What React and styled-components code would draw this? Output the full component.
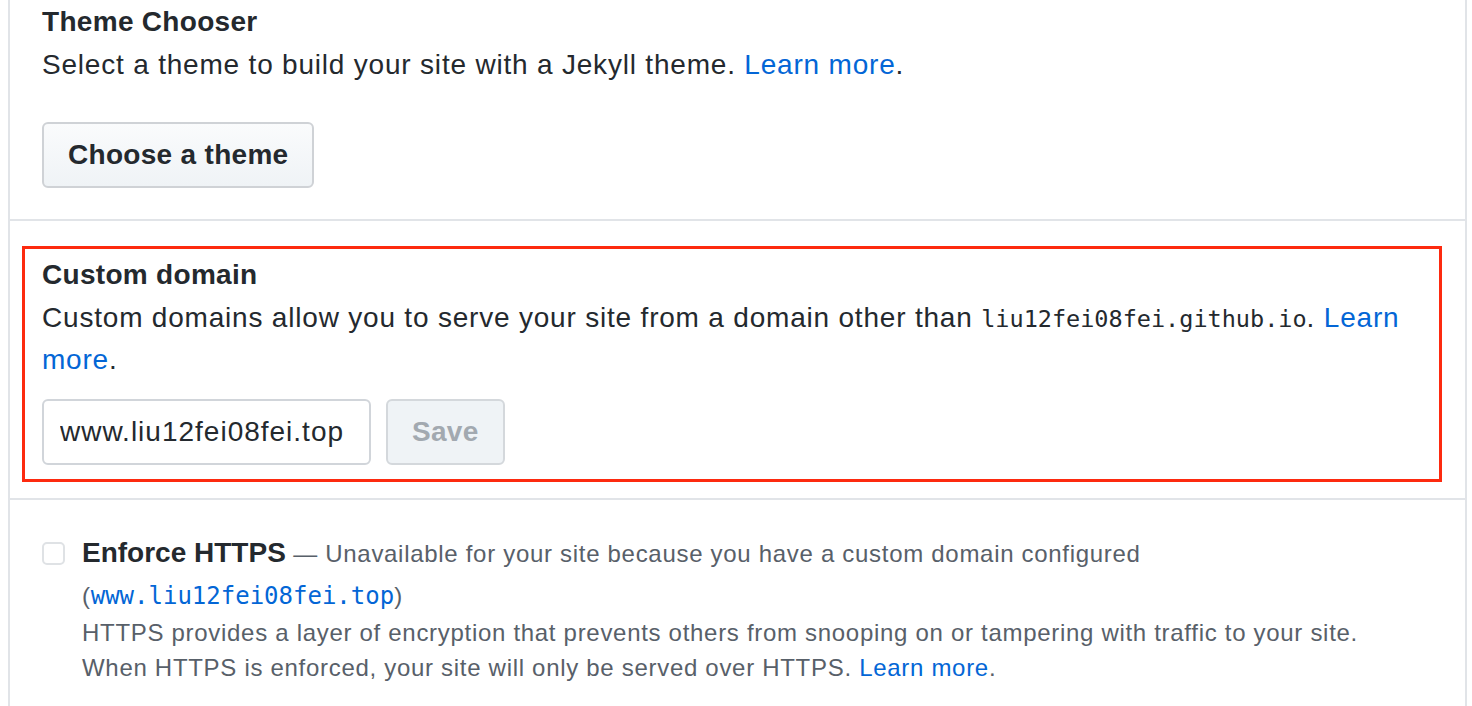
import React from 'react';
import styled, { createGlobalStyle } from 'styled-components';

const GlobalStyle = createGlobalStyle`
  body {
    margin: 0;
    background: #ffffff;
    font-family: "Liberation Sans", Arial, sans-serif;
    color: #24292e;
  }
`;

const Panel = styled.div`
  margin-left: 8px;
  width: 1459px;
  min-height: 740px;
  box-sizing: border-box;
  border-left: 2px solid #e1e4e8;
  border-right: 2px solid #e1e4e8;
`;

const Section = styled.section`
  padding: ${(p) => p.$pad};
  & + & {
    border-top: 2px solid #e1e4e8;
  }
`;

const Highlight = styled.div`
  border: 3px solid #fd2a0f;
  padding: 4px 17px 14px 17px;
`;

const Title = styled.h3`
  margin: 0;
  font-size: 28px;
  line-height: 44px;
  letter-spacing: 0.3px;
  font-weight: 700;
  color: #24292e;
`;

const Text = styled.p`
  margin: 0;
  font-size: 28px;
  line-height: 42px;
  letter-spacing: 0.8px;
  color: #24292e;
`;

const Link = styled.a`
  color: #0366d6;
  text-decoration: none;
`;

const Code = styled.code`
  font-family: "DejaVu Sans Mono", "Liberation Mono", monospace;
  font-size: ${(p) => p.$size || '23.5px'};
  line-height: 1;
  letter-spacing: 0;
  color: ${(p) => p.$color || 'inherit'};
`;

const Button = styled.button`
  height: 66px;
  padding: 0 24px;
  font-family: inherit;
  font-size: 28px;
  font-weight: 700;
  letter-spacing: 0.3px;
  color: ${(p) => (p.disabled ? '#a2a9b0' : '#24292e')};
  background: ${(p) =>
    p.disabled ? '#eff3f6' : 'linear-gradient(#fafbfc, #eff3f6)'};
  border: 2px solid ${(p) => (p.disabled ? '#d4d8dc' : '#cfd2d6')};
  border-radius: 6px;
  box-sizing: border-box;
`;

const ButtonRow = styled.div`
  margin-top: ${(p) => p.$top};
  display: flex;
  gap: 15px;
`;

const Input = styled.input`
  width: 329px;
  height: 66px;
  box-sizing: border-box;
  padding: 0 16px;
  font-family: inherit;
  font-size: 28px;
  letter-spacing: 1px;
  color: #24292e;
  border: 2px solid #d1d5da;
  border-radius: 6px;
  outline: none;
`;

const CheckRow = styled.div`
  display: flex;
  gap: 17px;
  align-items: flex-start;
`;

const Check = styled.span`
  flex: none;
  width: 23px;
  height: 23px;
  margin-top: 10px;
  box-sizing: border-box;
  border: 2px solid #dfe2e5;
  border-radius: 5px;
  background: #fff;
`;

const CheckBody = styled.div`
  flex: 1;
`;

const Label = styled.div`
  font-size: 24px;
  line-height: 42px;
  letter-spacing: 0.7px;
  color: #586069;

  strong {
    font-size: 28px;
    letter-spacing: 0;
    color: #24292e;
  }
`;

const Note = styled.p`
  margin: -2px 0 0;
  font-size: 24px;
  line-height: 35px;
  letter-spacing: 0.7px;
  color: #586069;
`;

export default function App() {
  return (
    <>
      <GlobalStyle />
      <Panel>
        <Section $pad="0 32px 31px 32px">
          <Title>Theme Chooser</Title>
          <Text>
            Select a theme to build your site with a Jekyll theme.{' '}
            <Link href="#">Learn more</Link>.
          </Text>
          <ButtonRow $top="36px">
            <Button>Choose a theme</Button>
          </ButtonRow>
        </Section>

        <Section $pad="25px 23px 16px 12px">
          <Highlight>
            <Title>Custom domain</Title>
            <Text>
              Custom domains allow you to serve your site from a domain other than{' '}
              <Code>liu12fei08fei.github.io</Code>. <Link href="#">Learn more</Link>.
            </Text>
            <ButtonRow $top="18px">
              <Input defaultValue="www.liu12fei08fei.top" />
              <Button disabled>Save</Button>
            </ButtonRow>
          </Highlight>
        </Section>

        <Section $pad="32px 32px 20px 32px">
          <CheckRow>
            <Check />
            <CheckBody>
              <Label>
                <strong>Enforce HTTPS</strong> — Unavailable for your site because you have a
                custom domain configured (
                <Code $size="24px" $color="#0366d6">
                  www.liu12fei08fei.top
                </Code>
                )
              </Label>
              <Note>
                HTTPS provides a layer of encryption that prevents others from snooping on or
                tampering with traffic to your site.
                <br />
                When HTTPS is enforced, your site will only be served over HTTPS.{' '}
                <Link href="#">Learn more</Link>.
              </Note>
            </CheckBody>
          </CheckRow>
        </Section>
      </Panel>
    </>
  );
}
